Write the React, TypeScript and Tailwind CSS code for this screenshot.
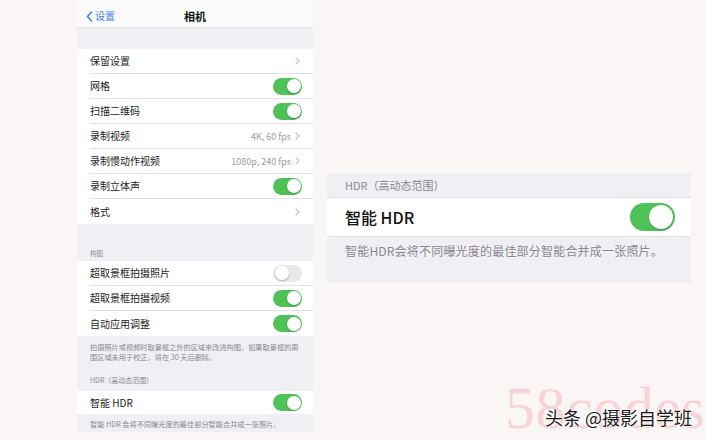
import React from "react";

const GREEN = "bg-[#4fc257]";

function Toggle({ on = true, big = false }: { on?: boolean; big?: boolean }) {
  const track = big ? "w-[45px] h-[28px] p-[2px]" : "w-[29px] h-[17px] p-[1.5px]";
  const knob = big ? "w-[24px] h-[24px]" : "w-[14px] h-[14px]";
  return (
    <div
      className={`${track} rounded-full flex items-center shrink-0 ${
        on ? `${GREEN} justify-end` : "bg-[#e8e8ea] justify-start"
      }`}
    >
      <div className={`${knob} rounded-full bg-white shadow-[0_1px_2px_rgba(0,0,0,0.25)]`} />
    </div>
  );
}

function Chevron() {
  return (
    <svg width="5" height="8" viewBox="0 0 5 8" className="shrink-0">
      <polyline points="1,1 4,4 1,7" fill="none" stroke="#c3c3c7" strokeWidth="1.1" strokeLinecap="round" strokeLinejoin="round" />
    </svg>
  );
}

function Row({
  label,
  value,
  toggle,
  chevron,
  last,
}: {
  label: string;
  value?: string;
  toggle?: boolean | "off";
  chevron?: boolean;
  last?: boolean;
}) {
  return (
    <div className="h-[25px] shrink-0 bg-white pl-[13px] flex">
      <div
        className={`flex-1 flex items-center justify-between pr-[11px] ${
          last ? "" : "border-b border-[#e3e3e6]"
        }`}
      >
        <span className="text-[10px] text-[#1c1c1e] leading-none">{label}</span>
        <div className="flex items-center gap-[4px]">
          {value && <span className="text-[9px] text-[#9a9a9e] leading-none">{value}</span>}
          {chevron && (
            <div className="pr-[2px]">
              <Chevron />
            </div>
          )}
          {toggle !== undefined && <Toggle on={toggle === true} />}
        </div>
      </div>
    </div>
  );
}

export default function App() {
  return (
    <div className="w-[705px] h-[440px] bg-[#faf6f6] relative overflow-hidden flex items-start font-['Noto_Sans_CJK_SC',sans-serif]">
      {/* Left phone screenshot */}
      <div className="ml-[77px] w-[236px] h-[432px] shrink-0 bg-[#efeff4] flex flex-col overflow-hidden">
        <div className="h-[28px] shrink-0 bg-[#fbfbfb] border-b border-[#e6e6e8] relative flex items-center justify-center pt-[5px]">
          <div className="absolute left-[9px] top-[5px] bottom-0 flex items-center gap-[2px]">
            <svg width="7" height="11" viewBox="0 0 7 11">
              <polyline points="5.5,1 1.5,5.5 5.5,10" fill="none" stroke="#3d82f6" strokeWidth="1.6" strokeLinecap="round" strokeLinejoin="round" />
            </svg>
            <span className="text-[10px] text-[#3d82f6] leading-none">设置</span>
          </div>
          <span className="text-[11px] font-bold text-[#111] leading-none">相机</span>
        </div>
        <div className="h-[21px] shrink-0" />
        <Row label="保留设置" chevron />
        <Row label="网格" toggle />
        <Row label="扫描二维码" toggle />
        <Row label="录制视频" value="4K, 60 fps" chevron />
        <Row label="录制慢动作视频" value="1080p, 240 fps" chevron />
        <Row label="录制立体声" toggle />
        <Row label="格式" chevron last />
        <div className="h-[37px] shrink-0 flex items-end pl-[13px] pb-[5px]">
          <span className="text-[6.5px] text-[#8a8a8e] leading-none">构图</span>
        </div>
        <Row label="超取景框拍摄照片" toggle="off" />
        <Row label="超取景框拍摄视频" toggle />
        <Row label="自动应用调整" toggle last />
        <div className="shrink-0 pl-[13px] pt-[6px] text-[7.2px] leading-[10px] text-[#8a8a8e] whitespace-nowrap">
          拍摄照片或视频时取景框之外的区域来改进构图。如果取景框的周
          <br />
          围区域未用于校正，将在 30 天后删除。
        </div>
        <div className="h-[29px] shrink-0 flex items-end pl-[13px] pb-[7px]">
          <span className="text-[7px] text-[#8a8a8e] leading-none">HDR（高动态范围）</span>
        </div>
        <div className="h-[23px] shrink-0 bg-white pl-[13px] pr-[11px] flex items-center justify-between">
          <span className="text-[10px] text-[#1c1c1e] leading-none">智能 HDR</span>
          <Toggle />
        </div>
        <div className="shrink-0 pl-[13px] pt-[5px] text-[7.2px] leading-[10px] text-[#8a8a8e] whitespace-nowrap">
          智能 HDR 会将不同曝光度的最佳部分智能合并成一张照片。
        </div>
      </div>

      {/* Right enlarged panel */}
      <div className="ml-[14px] mt-[173px] w-[364px] h-[110px] shrink-0 bg-[#efeff4] flex flex-col">
        <div className="h-[25px] shrink-0 flex items-center pl-[18px] border-b border-[#e2e2e6]">
          <span className="text-[11px] text-[#8a8a8e] leading-none">HDR（高动态范围）</span>
        </div>
        <div className="h-[39px] shrink-0 bg-white pl-[18px] pr-[16px] flex items-center justify-between border-b border-[#e2e2e6]">
          <span className="text-[16px] font-medium text-[#111] leading-none">智能 HDR</span>
          <Toggle big />
        </div>
        <div className="pl-[18px] pt-[6px] text-[12px] leading-[16px] text-[#8a8a8e] tracking-[0.2px]">
          智能HDR会将不同曝光度的最佳部分智能合并成一张照片。
        </div>
      </div>

      {/* Watermarks */}
      <div className="absolute left-[505px] top-[380px] h-[56px] text-[60px] leading-[56px] text-[#f7d3d6] font-['Liberation_Serif',serif] whitespace-nowrap tracking-[0.5px]">
        58codes
      </div>
      <div className="absolute left-[545px] top-[408px] text-[18px] leading-none text-[#1a1a1a] whitespace-nowrap [text-shadow:0_0_2px_#fff,0_0_2px_#fff,0_0_2px_#fff]">
        头条 @摄影自学班
      </div>
    </div>
  );
}
